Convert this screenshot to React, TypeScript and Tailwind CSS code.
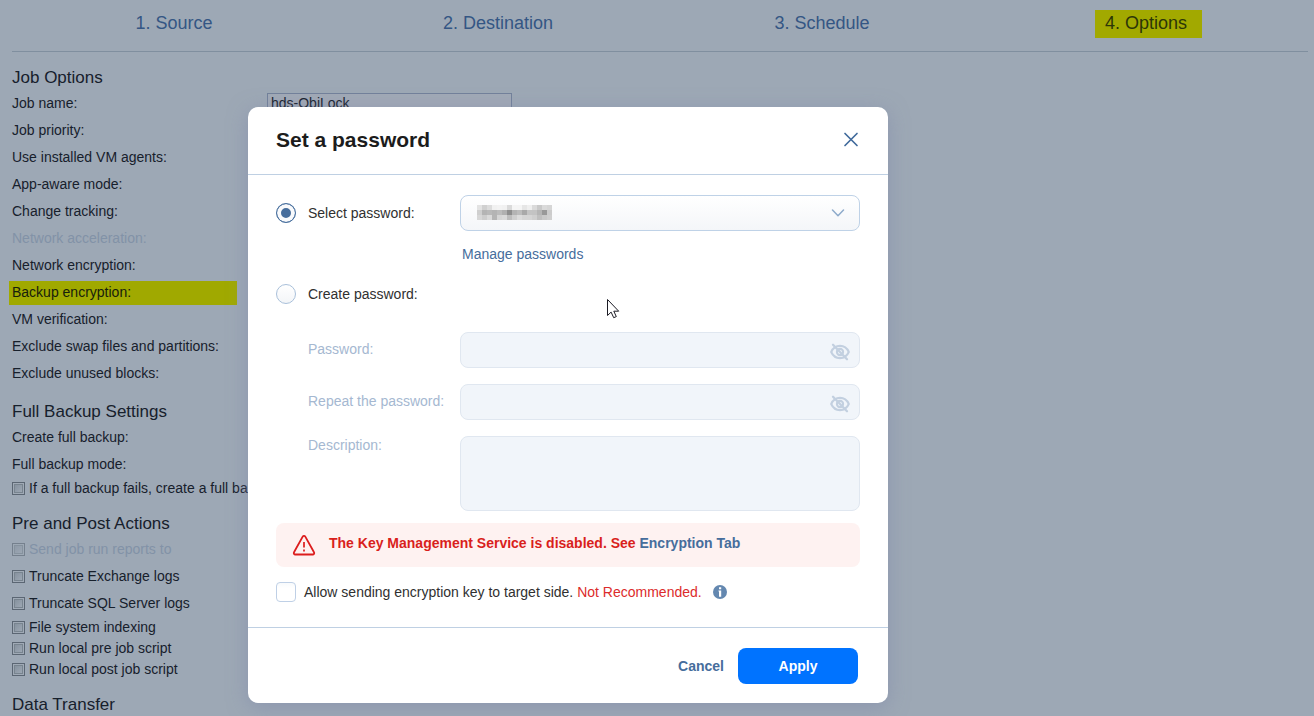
import React from "react";

const jobOptions = [
  { label: "Job priority:" },
  { label: "Use installed VM agents:" },
  { label: "App-aware mode:" },
  { label: "Change tracking:" },
  { label: "Network acceleration:", muted: true },
  { label: "Network encryption:" },
  { label: "Backup encryption:", marked: true },
  { label: "VM verification:" },
  { label: "Exclude swap files and partitions:" },
  { label: "Exclude unused blocks:" },
];

const maskRows = [
  ["#e3e3e3", "#d0d0d0", "#dcdcdc", "#f1f1f1", "#f3f3f3", "#f1f1f1", "#dadada", "#f5f5f5", "#f5f5f5", "#e6e6e6", "#efefef", "#dadada", "#c9c9c9", "#dadada", "#d6d6d6"],
  ["#cfcfcf", "#b4b4b4", "#b9b9b9", "#b4b4b4", "#bcbcbc", "#b0b0b0", "#8e8e8e", "#b4b4b4", "#bdbdbd", "#a9a9a9", "#c4c4c4", "#c3c3c3", "#b5b5b5", "#999999", "#cccccc"],
  ["#d7d7d7", "#cdcdcd", "#dadada", "#b5b5b5", "#d5d5d5", "#d9d9d9", "#bdbdbd", "#cfcfcf", "#dcdcdc", "#d5d5d5", "#d5d5d5", "#cfcfcf", "#bfbfbf", "#c9c9c9", "#cfcfcf"],
];

function SectionTitle({ children }: { children: React.ReactNode }) {
  return <h2 className="mt-[11px] h-[26px] text-[17px] leading-7 text-[#17202c]">{children}</h2>;
}

function CheckRow({ label, disabled, tall }: { label: string; disabled?: boolean; tall?: boolean }) {
  return (
    <label
      className={`flex items-center gap-1 whitespace-nowrap ${tall ? "h-[27px]" : "h-[21px]"} ${
        disabled ? "text-[#8292a7]" : "text-[#17202c]"
      }`}
    >
      <input
        type="checkbox"
        disabled={disabled}
        className="size-[13px] shrink-0 appearance-none border border-[#5b6673] bg-linear-to-br from-[#808c99] to-[#a3adb9] shadow-[inset_0_0_0_1px_#a0aab6,inset_0_0_0_2px_#78848f] disabled:opacity-60"
      />
      {label}
    </label>
  );
}

function EyeOffIcon() {
  return (
    <svg width="20" height="18" viewBox="0 0 20 18" fill="none" stroke="#c3d0e0" aria-hidden="true">
      <path d="M1.200 9C3 5 6.200 2.900 10 2.900S17 5 18.800 9C17 13 13.800 15.100 10 15.100S3 13 1.200 9Z" strokeWidth="2.100" strokeLinejoin="round" />
      <circle cx="10" cy="9" r="3.100" strokeWidth="2.100" />
      <path d="M3 1.800 17 16.200" strokeWidth="2.300" strokeLinecap="round" />
    </svg>
  );
}

function PasswordField({ id, label }: { id: string; label: string }) {
  return (
    <div className="mb-4 flex pl-8">
      <label htmlFor={id} className="w-[152px] shrink-0 leading-[34px] text-[#a5b8d1]">
        {label}
      </label>
      <div className="relative h-9 flex-1">
        <input
          id={id}
          type="password"
          disabled
          className="h-9 w-full rounded-lg border border-[#e0e7f0] bg-[#f1f5fa] pr-10 pl-4"
        />
        <button type="button" disabled aria-label="Show password" className="absolute top-[11px] right-[10px]">
          <EyeOffIcon />
        </button>
      </div>
    </div>
  );
}

const radioClass =
  "size-5 shrink-0 appearance-none rounded-full border border-[#a9c0da] bg-linear-to-b from-white to-[#f3f5f8] checked:border-[#4a719f] checked:bg-[#466d9c] checked:bg-none checked:shadow-[inset_0_0_0_4px_#f9fafc]";

function PasswordDialog() {
  return (
    <section
      role="dialog"
      aria-labelledby="dialog-title"
      className="w-[640px] rounded-[10px] bg-white text-[14px] leading-5 text-[#303030] shadow-[0_4px_20px_rgba(125,135,170,0.550)]"
    >
      <header className="flex h-[68px] items-center justify-between border-b border-[#bfd0e3] pr-[29px] pb-[2px] pl-7">
        <h1 id="dialog-title" className="text-[21px] leading-7 font-bold text-[#1c1c1c]">
          Set a password
        </h1>
        <button type="button" aria-label="Close">
          <svg width="16" height="16" viewBox="0 0 16 16" fill="none" stroke="#416b9c" strokeWidth="1.700" aria-hidden="true">
            <path d="M2 1.500 14 13.500M14 1.500 2 13.500" strokeLinecap="round" />
          </svg>
        </button>
      </header>

      <form className="px-7 pt-5 pb-[25px]">
        <div className="flex items-center">
          <label className="flex w-[184px] shrink-0 items-center gap-3">
            <input type="radio" name="mode" defaultChecked className={radioClass} />
            Select password:
          </label>
          <div className="relative flex-1">
            <select
              aria-label="Saved password"
              className="block h-9 w-full appearance-none rounded-lg border border-[#bfd2e7] bg-linear-to-b from-white to-[#f4f6f9] px-4"
            >
              <option aria-label="Saved password" value="saved"></option>
            </select>
            <svg className="pointer-events-none absolute top-[10px] left-[17px]" width="75" height="15" shapeRendering="crispEdges" aria-hidden="true">
              {maskRows.map((row, y) =>
                row.map((color, x) => <rect key={`${x}-${y}`} x={x * 5} y={y * 5} width="5" height="5" fill={color} />)
              )}
            </svg>
            <svg className="pointer-events-none absolute top-[14px] right-[15px]" width="14" height="8" viewBox="0 0 14 8" fill="none" stroke="#8eabcb" strokeWidth="1.500" aria-hidden="true">
              <path d="m1.500 1 5.500 5.700L12.500 1" strokeLinecap="round" strokeLinejoin="round" />
            </svg>
          </div>
        </div>

        <div className="mt-[13px] flex pl-[186px]">
          <a href="#passwords" className="text-[#466d9c]">
            Manage passwords
          </a>
        </div>

        <label className="mt-5 mb-7 flex items-center gap-3">
          <input type="radio" name="mode" className={radioClass} />
          Create password:
        </label>

        <PasswordField id="password" label="Password:" />
        <PasswordField id="repeat-password" label="Repeat the password:" />
        <div className="flex pl-8">
          <label htmlFor="description" className="w-[152px] shrink-0 leading-[18px] text-[#a5b8d1]">
            Description:
          </label>
          <textarea
            id="description"
            disabled
            className="block h-[75px] flex-1 resize-none rounded-lg border border-[#e0e7f0] bg-[#f1f5fa] px-4 py-2"
          />
        </div>

        <div role="alert" className="mt-3 flex h-11 items-center gap-[13px] rounded-lg bg-[#fef2f1] pl-4 font-bold text-[#d91f1c]">
          <svg width="24" height="22" viewBox="0 0 24 22" fill="none" stroke="#dc1d1d" aria-hidden="true">
            <path d="M10.700 2.600a1.500 1.500 0 0 1 2.600 0l8.700 15.600a1.500 1.500 0 0 1-1.300 2.300H3.300A1.500 1.500 0 0 1 2 18.200Z" strokeWidth="1.800" strokeLinejoin="round" />
            <path d="M12 8v5.500M12 15.500v2" strokeWidth="1.700" />
          </svg>
          <p className="pb-1">
            The Key Management Service is disabled. See{" "}
            <a href="#encryption" className="text-[#466d9c]">
              Encryption Tab
            </a>
          </p>
        </div>

        <div className="mt-[15px] flex items-center">
          <label className="flex items-center gap-2">
            <input
              type="checkbox"
              className="size-5 shrink-0 appearance-none rounded border border-[#bfd0e6] bg-linear-to-b from-[#f8fafc] to-white to-30% checked:bg-[#466d9c]"
            />
            <span>
              Allow sending encryption key to target side. <span className="text-[#dc2b2b]">Not Recommended.</span>
            </span>
          </label>
          <button type="button" aria-label="More information" className="ml-[11px]">
            <svg width="14" height="14" viewBox="0 0 14 14" aria-hidden="true">
              <circle cx="7" cy="7" r="7" fill="#6488b0" />
              <path d="M6 2.300h2.200v1.900H6zM5.500 5.500h2.700v6.200H6V6.500h-.500z" fill="#fff" />
            </svg>
          </button>
        </div>
      </form>

      <footer className="flex h-[76px] items-center justify-end gap-[14px] border-t border-[#bfd0e3] pr-[30px] font-bold">
        <button type="button" className="text-[#466d9c]">
          Cancel
        </button>
        <button type="button" className="h-9 w-[120px] rounded-lg bg-[#0073ff] text-white">
          Apply
        </button>
      </footer>
    </section>
  );
}

export default function App() {
  return (
    <div className="relative h-screen overflow-hidden bg-[#9da8b5] font-['Liberation_Sans',Arial,sans-serif] text-[14px] text-[#17202c]">
      <div className="pr-[6px] pl-3">
        <nav className="grid h-[52px] grid-cols-4 items-center justify-items-center border-b border-[#808f9f] pb-1 text-[18px] leading-[26px] text-[#345684]">
          <button type="button" className="pb-[2px]">1. Source</button>
          <button type="button" className="pb-[2px]">2. Destination</button>
          <button type="button" className="pb-[2px]">3. Schedule</button>
          <button type="button" aria-current="step" className="-mr-[5px] bg-[#a2a900] pr-[15px] pb-[2px] pl-[10px] text-[#2c3608]">
            4. Options
          </button>
        </nav>

        <main className="pt-px">
          <SectionTitle>Job Options</SectionTitle>
          <div className="flex h-[27px] items-center">
            <label htmlFor="job-name" className="w-[255px]">
              Job name:
            </label>
            <input
              id="job-name"
              defaultValue="hds-ObjLock"
              className="h-[21px] w-[245px] border border-[#72809a] bg-[#a1a9b6] px-[3px]"
            />
          </div>
          {jobOptions.map(({ label, muted, marked }) => (
            <div key={label} className={`flex h-[27px] items-center ${muted ? "text-[#8292a7]" : ""}`}>
              <span className={marked ? "-ml-[3px] h-6 w-[228px] bg-[#a0a900] pl-[3px] leading-[22px] text-[#17200c]" : ""}>
                {label}
              </span>
            </div>
          ))}

          <SectionTitle>Full Backup Settings</SectionTitle>
          <div className="flex h-[27px] items-center">Create full backup:</div>
          <div className="flex h-[27px] items-center">Full backup mode:</div>
          <CheckRow label="If a full backup fails, create a full ba" />

          <SectionTitle>Pre and Post Actions</SectionTitle>
          <CheckRow label="Send job run reports to" disabled tall />
          <CheckRow label="Truncate Exchange logs" tall />
          <CheckRow label="Truncate SQL Server logs" tall />
          <CheckRow label="File system indexing" />
          <CheckRow label="Run local pre job script" />
          <CheckRow label="Run local post job script" />

          <SectionTitle>Data Transfer</SectionTitle>
        </main>
      </div>

      <div className="absolute inset-0 pt-[107px] pl-[248px]">
        <PasswordDialog />
      </div>

      <svg className="pointer-events-none absolute top-[298px] left-[606px]" width="15" height="22" viewBox="0 0 15 22" aria-hidden="true">
        <path d="M1.500 1.500v16l3.600-3.400 2.600 5.600 2.600-1.100-2.500-5.400h4.900Z" fill="#fff" stroke="#1b1b24" strokeWidth="1" />
      </svg>
    </div>
  );
}
